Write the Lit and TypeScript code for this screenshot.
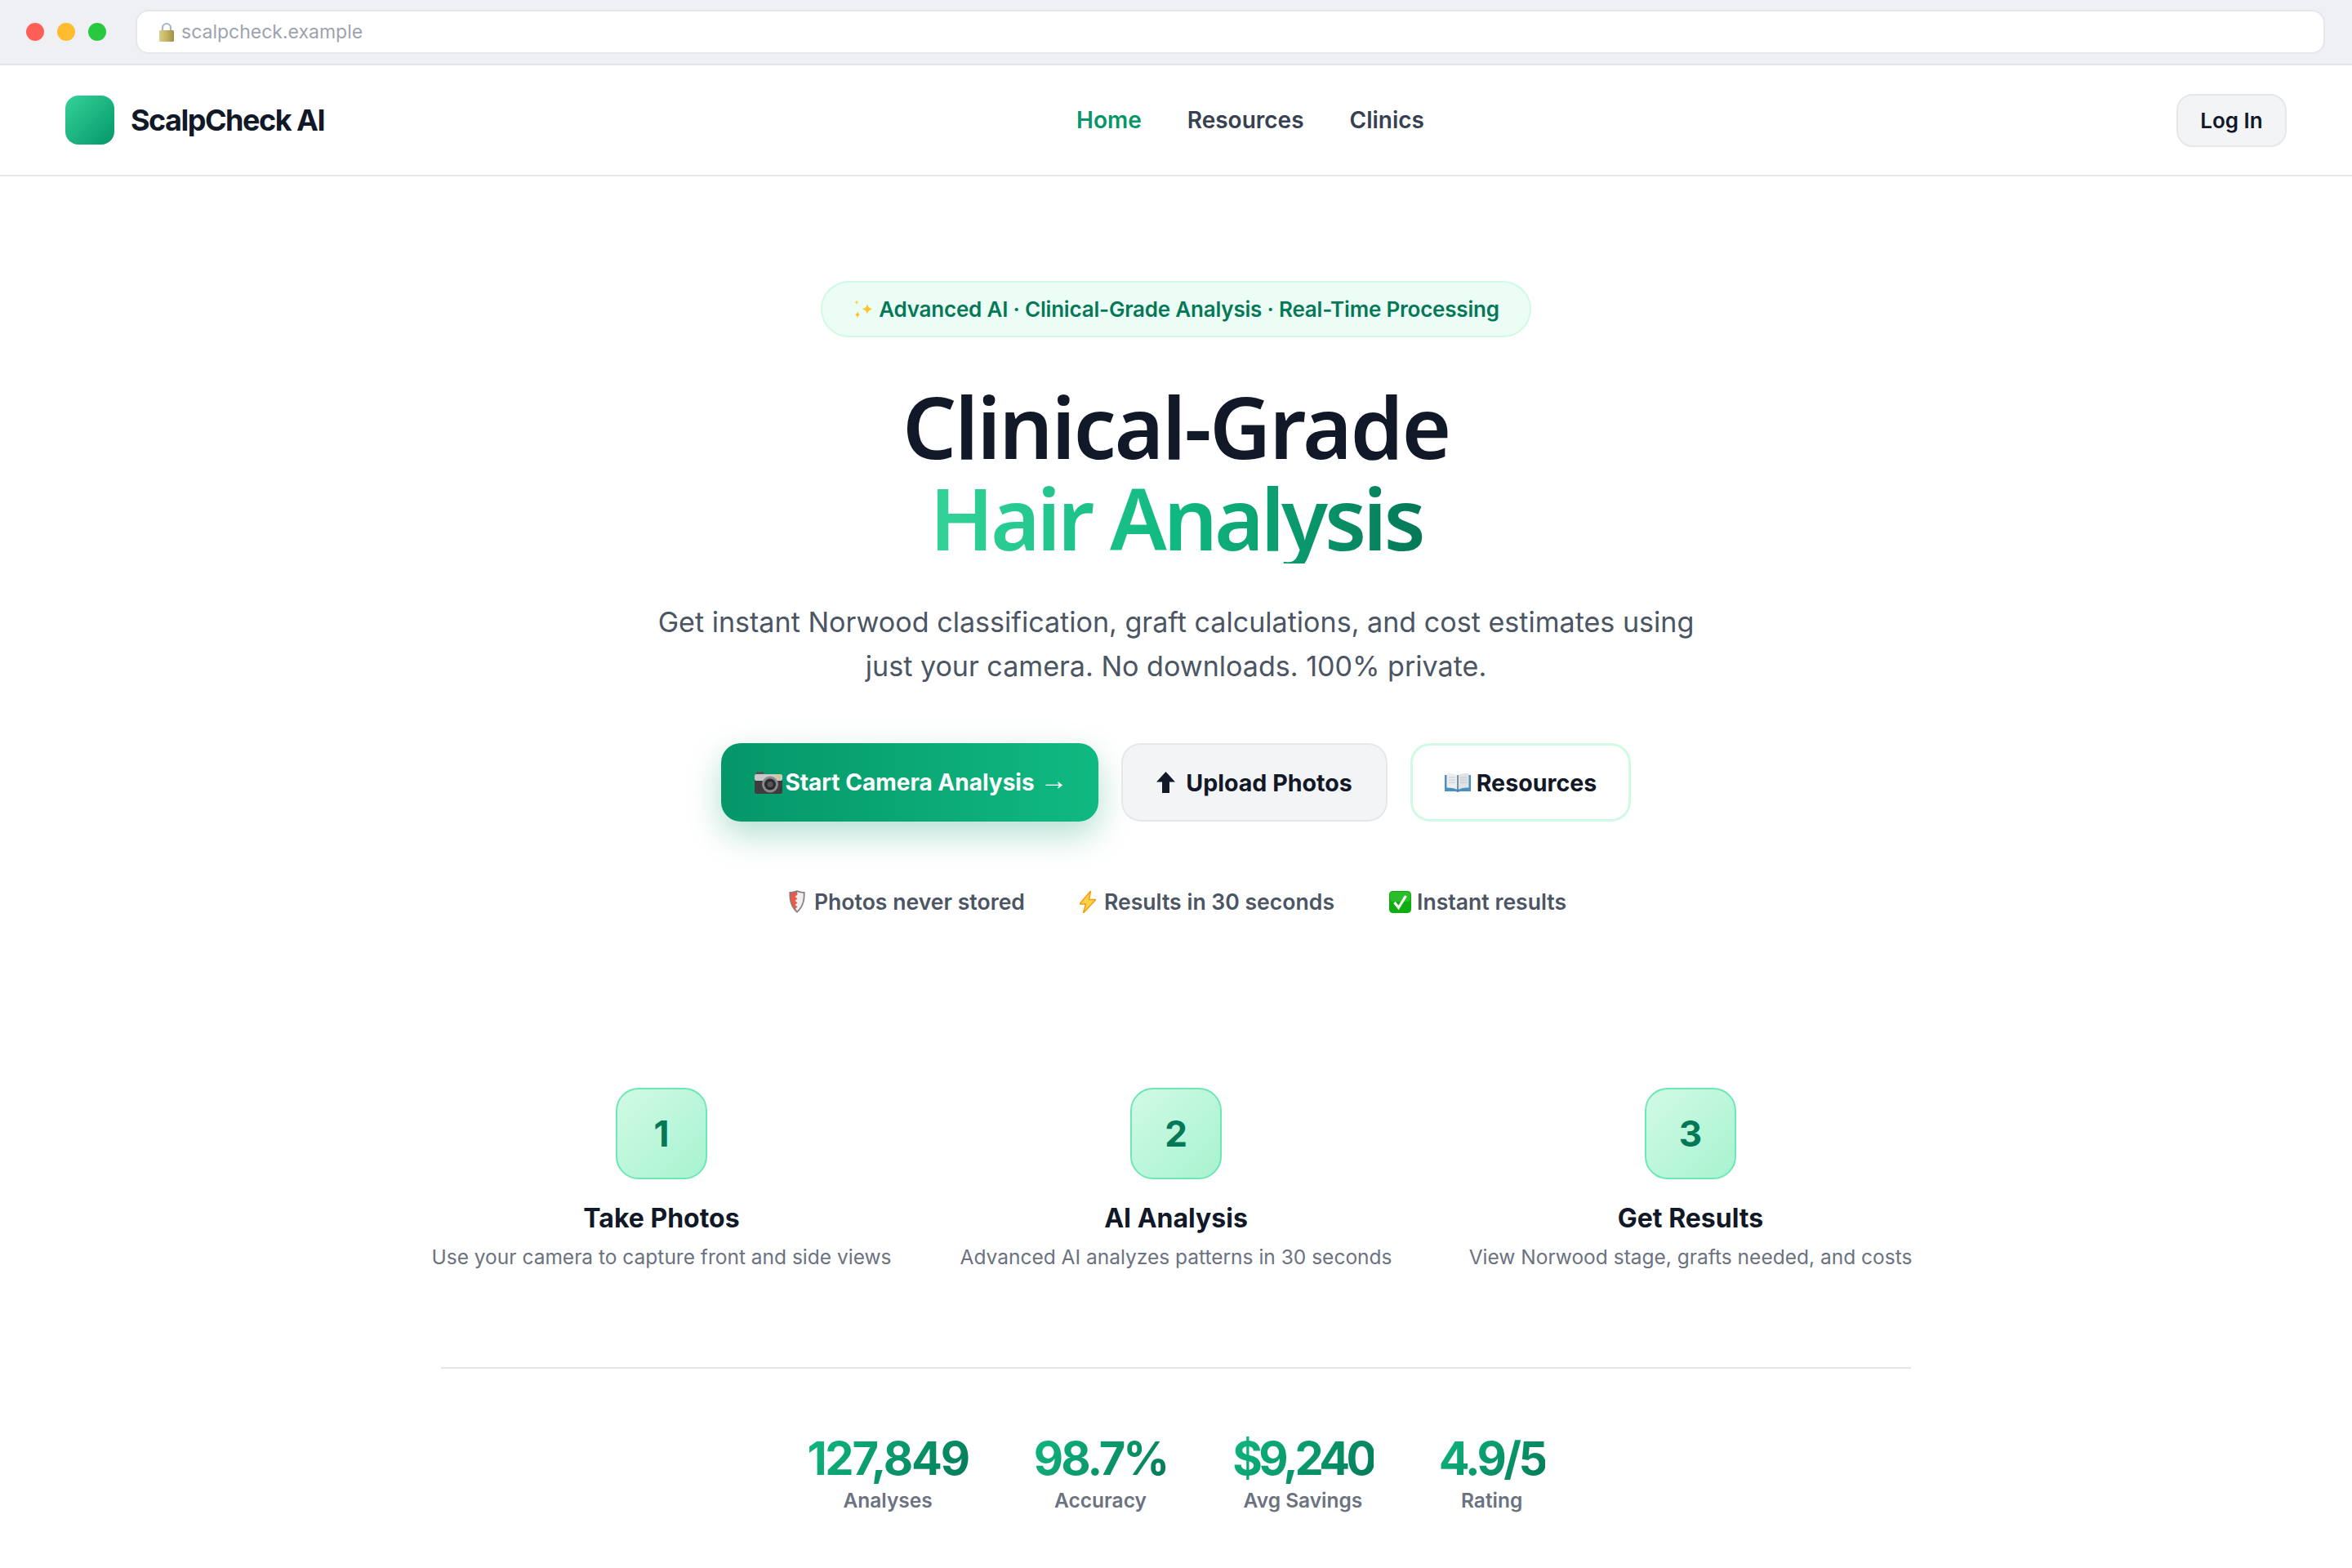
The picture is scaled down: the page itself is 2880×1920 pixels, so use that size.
import { LitElement, html, css } from "lit";
import { customElement } from "lit/decorators.js";

const steps = [
  ["1", "Take Photos", "Use your camera to capture front and side views"],
  ["2", "AI Analysis", "Advanced AI analyzes patterns in 30 seconds"],
  ["3", "Get Results", "View Norwood stage, grafts needed, and costs"],
];
const stats: [string, string, number][] = [
  ["127,849", "Analyses", -2.2],
  ["98.7%", "Accuracy", -3],
  ["$9,240", "Avg Savings", -4.6],
  ["4.9/5", "Rating", -3.6],
];

const lock = html`<svg width="18" height="24" viewBox="0 0 18 24">
  <defs><linearGradient id="lk" x1="0" x2="1" y1="0" y2="0"><stop offset="0" stop-color="#d9cd84"/><stop offset=".5" stop-color="#c4b463"/><stop offset="1" stop-color="#9c8f45"/></linearGradient></defs>
  <path d="M4 11V7a5 5 0 0 1 10 0v4" fill="none" stroke="#a9b4c4" stroke-width="2.2"/>
  <rect x="0" y="10" width="18" height="14" rx="1.5" fill="url(#lk)"/>
</svg>`;
const sparkles = html`<svg width="25" height="23" viewBox="0 0 25 23">
  <path d="M14 5c.8 4 2.6 5.6 6.5 6.4-3.9.8-5.7 2.6-6.5 6.6-.8-4-2.6-5.800-6.500-6.600C11.400 10.600 13.200 9 14 5z" transform="translate(4 0)" fill="#fbc531"/>
  <path d="M5 0c.3 2 1 2.800 2.600 3.200C6 3.600 5.300 4.400 5 6.400 4.700 4.400 4 3.600 2.400 3.200 4 2.800 4.700 2 5 0z" fill="#fcd34d"/>
  <path d="M6 14c.4 2.800 1.300 3.800 3.200 4.300C7.300 18.800 6.400 19.800 6 23c-.4-3.200-1.300-4.200-3.200-4.700C4.700 17.800 5.600 16.800 6 14z" fill="#fbbf24"/>
</svg>`;
const camera = html`<svg width="34" height="27" viewBox="0 0 34 27">
  <rect x="2" y="0" width="9" height="4" rx="1" fill="#555"/>
  <rect x="0" y="3" width="34" height="24" rx="2.500" fill="#3d3d3f"/>
  <rect x="0" y="3" width="34" height="8" rx="2" fill="#c9c9cb"/>
  <circle cx="19" cy="15.500" r="10" fill="#8a8a8d"/>
  <circle cx="19" cy="15.500" r="7" fill="#2c2c2e"/>
  <circle cx="19" cy="15.500" r="3.500" fill="#55565c"/>
  <rect x="27" y="4.500" width="4" height="3" fill="#e6c94f"/>
</svg>`;
const upArrow = html`<svg width="23" height="26" viewBox="0 0 23 26"><path d="M11.500 0 23 12.500h-7V26H7V12.500H0z" fill="#111827"/></svg>`;
const book = html`<svg width="32" height="24" viewBox="0 0 32 24">
  <path d="M0 3h32v20H19l-3 1-3-1H0z" fill="#4a90c2"/>
  <path d="M2.500 1c5 0 10.500 0 13 2.500V21c-3-2-8-2.500-13-2.500z" fill="#eceff1"/>
  <path d="M29.500 1c-5 0-10.500 0-13 2.500V21c3-2 8-2.500 13-2.500z" fill="#dfe3e6"/>
  <path d="M5 6h8M5 9h8M5 12h8M19 6h8M19 9h8M19 12h8" stroke="#c3c8cc" stroke-width="1"/>
  <path d="M16 3.500V23" stroke="#5b6770" stroke-width="1"/>
</svg>`;
const shield = html`<svg width="20" height="28" viewBox="0 0 20 28">
  <path d="M10 0c3 1.500 6 2 9.500 2 .6 10-1.500 19-9.500 26C2 21-.1 12 .5 2 4 2 7 1.500 10 0z" fill="#85807e"/>
  <path d="M10 2C7.500 3 5 3.500 2.200 3.700 1.900 12 3.500 19.500 10 25.500z" fill="#ea5a47"/>
  <path d="M10 2c2.500 1 5 1.500 7.800 1.700.3 8.300-1.300 15.800-7.800 21.800l-2-3 2.500-2-3-2.500 3-2.500-3-2.500 3-2.500-3-2.500 3-2.500z" fill="#eef0f0"/>
</svg>`;
const bolt = html`<svg width="20" height="27" viewBox="0 0 20 27">
  <path d="M13.500 0 0 16h7.500L4.500 27 20 10.500h-8.500z" fill="#fcd34d" stroke="#f59e0b" stroke-width="1.500" stroke-linejoin="round"/>
</svg>`;
const check = html`<svg width="27" height="27" viewBox="0 0 27 27">
  <rect width="27" height="27" rx="4.500" fill="#10ad10"/>
  <rect x="1" y="1" width="25" height="12" rx="4" fill="#3cc83c" opacity=".6"/>
  <path d="M6.500 14l5 6.500L20.500 6" fill="none" stroke="#fff" stroke-width="3.200"/>
</svg>`;

@customElement("app-root")
export class AppRoot extends LitElement {
  static styles = css`
    :host { display: block; font-family: Inter, "Liberation Sans", sans-serif; background: #fff; color: #111827; height: 1920px; overflow: hidden; }
    svg { display: block; flex: none; }
    .chrome { display: flex; align-items: center; gap: 16px; height: 78px; padding: 0 33px 0 32px; background: #eef0f3; border-bottom: 2px solid #e2e4e9; }
    .dot { width: 22px; height: 22px; border-radius: 50%; }
    .dots { display: flex; gap: 16px; margin-right: 20px; }
    .addr { flex: 1; height: 54px; box-sizing: border-box; background: #fff; border: 2px solid #e5e7eb; border-radius: 16px; display: flex; align-items: center; padding-left: 27px; font-size: 23px; color: #9ca3af; gap: 9px; }
    nav { height: 134px; border-bottom: 2px solid #e5e7eb; display: flex; justify-content: space-between; align-items: center; padding: 0 80px; }
    .brand { display: flex; align-items: center; gap: 20px; font-size: 36px; font-weight: 700; letter-spacing: -1.5px; }
    .logo { width: 60px; height: 60px; border-radius: 16px; background: linear-gradient(135deg, #34d399, #059669); }
    .links { display: flex; gap: 56px; font-size: 28px; font-weight: 600; color: #374151; }
    .links .on { color: #059669; }
    .login { box-sizing: border-box; width: 135px; height: 65px; display: flex; align-items: center; justify-content: center; border: 2px solid #e5e7eb; border-radius: 20px; background: #f3f4f6; font-size: 26px; font-weight: 600; }
    main { display: flex; flex-direction: column; align-items: center; padding-top: 128px; }
    .pill { box-sizing: border-box; height: 69px; display: flex; align-items: center; gap: 7px; padding: 0 37px; background: #ecfdf5; border: 2px solid #d1fae5; border-radius: 35px; color: #047857; font-size: 26px; font-weight: 600; letter-spacing: -0.2px; }
    h1 { margin: 53px 0 0; font-family: "Noto Sans", sans-serif; font-size: 104px; line-height: 112px; font-weight: 600; text-align: center; letter-spacing: -2.3px; }
    h1 span { display: inline-block; letter-spacing: -4.100px; background: linear-gradient(90deg, #34d399, #10b981, #047857); -webkit-background-clip: text; background-clip: text; color: transparent; }
    .sub { margin: 45px 0 0; font-size: 34.100px; line-height: 54px; color: #4b5563; text-align: center; width: 1300px; }
    .cta { display: flex; gap: 28px; margin-top: 67px; }
    .btn { box-sizing: border-box; height: 96px; display: flex; align-items: center; justify-content: center; border-radius: 24px; font-size: 28.600px; font-weight: 700; }
    .primary { width: 462px; gap: 3px; font-size: 28px; color: #fff; background: linear-gradient(90deg, #059669, #10b981); box-shadow: 0 16px 40px rgba(5,150,105,.3); }
    .arrow { font-family: "Liberation Sans", sans-serif; font-weight: 400; font-size: 34px; margin: 0 -4px 0 4px; padding-bottom: 6px; }
    .second { width: 326px; gap: 13px; background: #f3f4f6; border: 2px solid #e5e7eb; }
    .third { width: 270px; gap: 7px; background: #fff; border: 3px solid #d1fae5; }
    .trust { display: flex; gap: 67px; margin: 82px 0 0 4px; font-size: 26.600px; font-weight: 600; color: #4b5563; }
    .trust > div { display: flex; align-items: center; gap: 10px; }
    .trust > div:first-child { gap: 11px; }
    .trust > div:last-child { gap: 7px; }
    .steps { display: grid; grid-template-columns: repeat(3, 630px); justify-items: center; margin-top: 212px; }
    .step { display: flex; flex-direction: column; align-items: center; }
    .num { box-sizing: border-box; width: 112px; height: 112px; border-radius: 28px; border: 2px solid #6ee7b7; background: linear-gradient(135deg, #d1fae5, #a7f3d0); display: flex; align-items: center; justify-content: center; font-size: 44px; font-weight: 700; color: #047857; }
    .step h3 { margin: 28px 0 0; font-size: 32px; font-weight: 700; line-height: 40px; }
    .step p { margin: 8px 0 0; font-size: 24.500px; line-height: 38px; color: #6b7280; }
    .rule { width: 1800px; height: 2px; background: #e5e7eb; margin-top: 116px; }
    .stats { display: flex; gap: 80px; margin-top: 75px; text-align: center; }
    .val { font-size: 56px; font-weight: 700; line-height: 70px; background: linear-gradient(135deg, #10b981, #047857); -webkit-background-clip: text; background-clip: text; color: transparent; }
    .lab { font-size: 24.500px; font-weight: 600; color: #6b7280; line-height: 32px; }
  `;
  render() {
    return html`
      <div class="chrome">
        <div class="dots">
          <div class="dot" style="background:#ff5f57"></div>
          <div class="dot" style="background:#febc2e"></div>
          <div class="dot" style="background:#28c840"></div>
        </div>
        <div class="addr">${lock}<span>scalpcheck.example</span></div>
      </div>
      <nav>
        <div class="brand"><div class="logo"></div>ScalpCheck AI</div>
        <div class="links"><span class="on">Home</span><span>Resources</span><span>Clinics</span></div>
        <div class="login">Log In</div>
      </nav>
      <main>
        <div class="pill">${sparkles}<span>Advanced AI · Clinical-Grade Analysis · Real-Time Processing</span></div>
        <h1>Clinical-Grade<br /><span>Hair Analysis</span></h1>
        <p class="sub">Get instant Norwood classification, graft calculations, and cost estimates using just your camera. No downloads. 100% private.</p>
        <div class="cta">
          <div class="btn primary">${camera}<span>Start Camera Analysis</span><span class="arrow">→</span></div>
          <div class="btn second">${upArrow}<span>Upload Photos</span></div>
          <div class="btn third">${book}<span>Resources</span></div>
        </div>
        <div class="trust">
          <div>${shield}<span>Photos never stored</span></div>
          <div>${bolt}<span>Results in 30 seconds</span></div>
          <div>${check}<span>Instant results</span></div>
        </div>
        <div class="steps">
          ${steps.map(([n, t, d]) => html`<div class="step"><div class="num">${n}</div><h3>${t}</h3><p>${d}</p></div>`)}
        </div>
        <div class="rule"></div>
        <div class="stats">
          ${stats.map(([v, l, s]) => html`<div><div class="val" style="letter-spacing:${s}px">${v}</div><div class="lab">${l}</div></div>`)}
        </div>
      </main>
    `;
  }
}
